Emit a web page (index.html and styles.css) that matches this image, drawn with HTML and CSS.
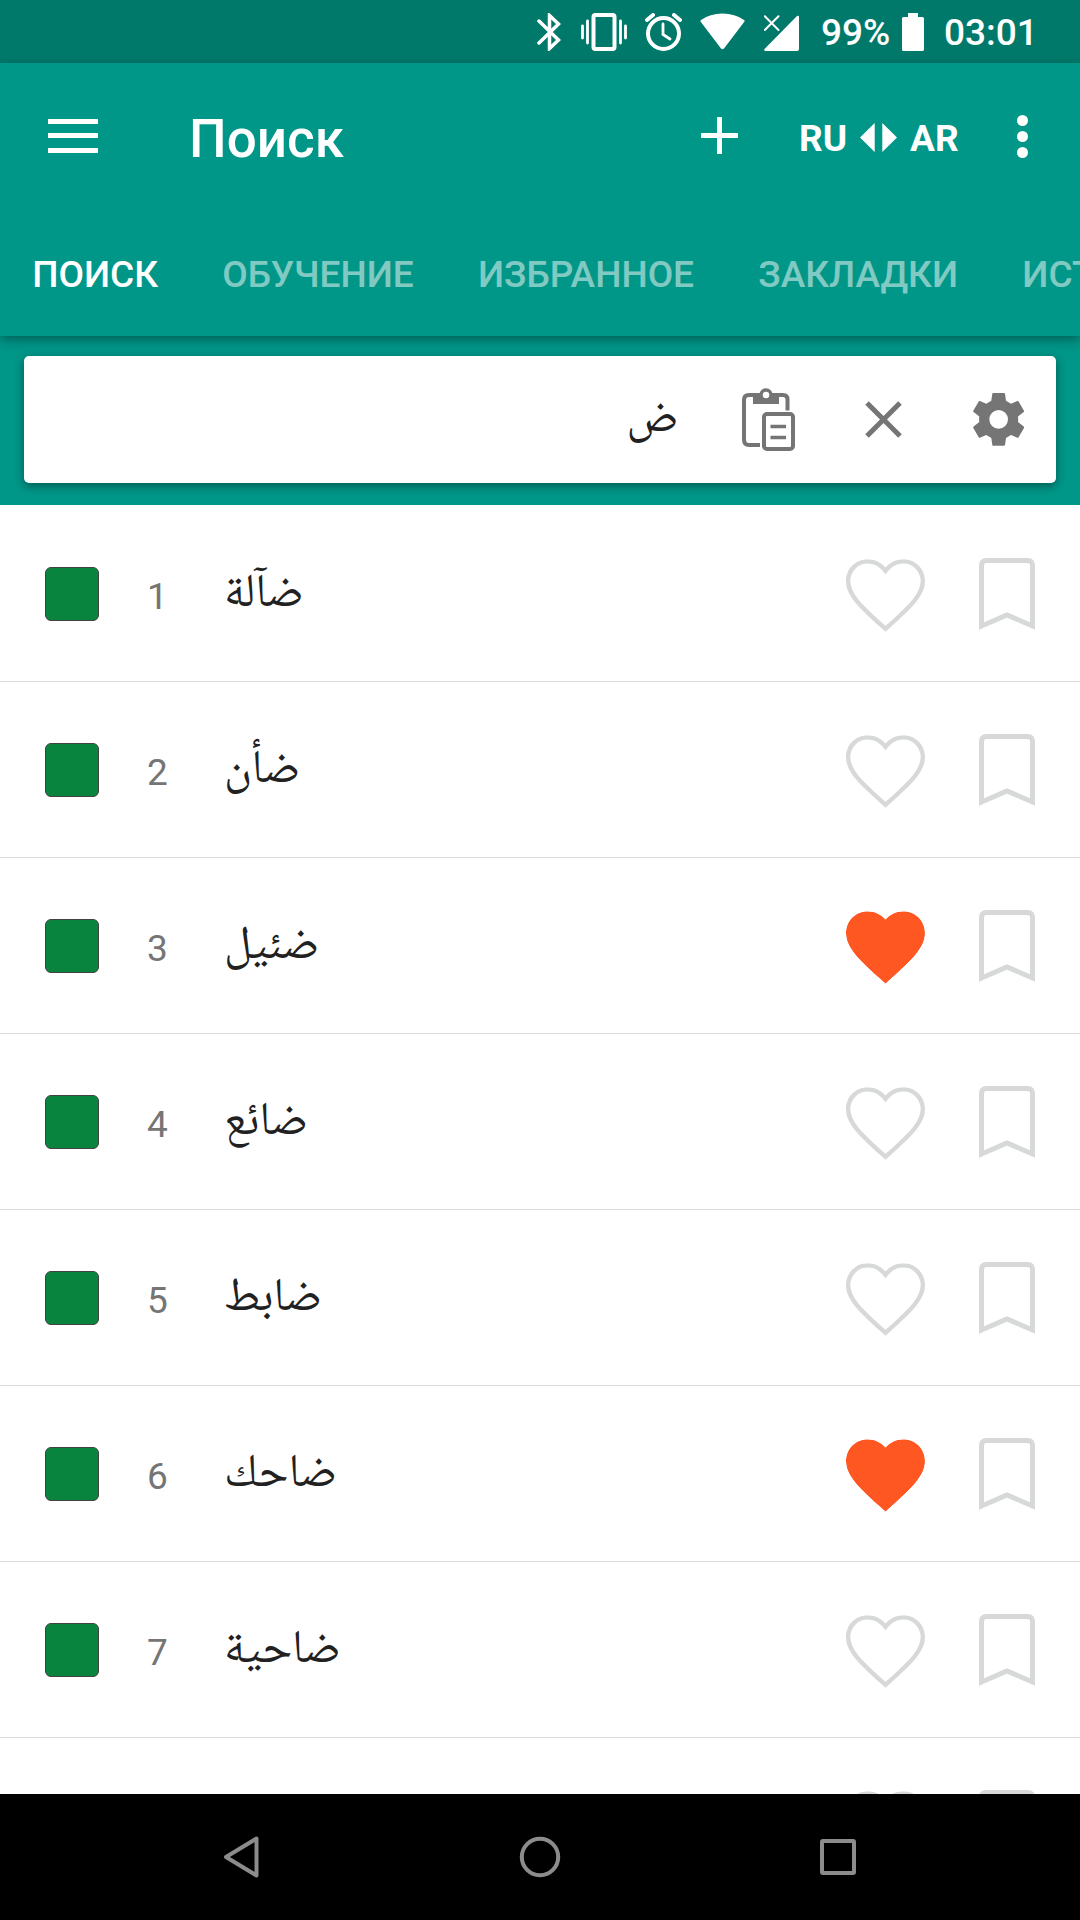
FILE: index.html
```html
<!DOCTYPE html>
<html lang="ru">

<head>
  <meta charset="utf-8">
  <meta name="viewport" content="width=device-width">
  <title>Поиск</title>
  <link rel="stylesheet" href="styles.css">
</head>

<body>
  <svg class="defs" width="0" height="0">
    <clipPath id="heart-clip">
      <path d="M12 21.350l-1.450-1.320C5.400 15.360 2 12.280 2 8.500 2 5.420 4.420 3 7.500 3c1.740 0 3.410.81 4.500 2.090C13.090 3.810 14.760 3 16.500 3 19.580 3 22 5.420 22 8.500c0 3.780-3.400 6.860-8.550 11.540z"/>
    </clipPath>
    <symbol id="heart" viewBox="2 3 20 18.350">
      <path clip-path="url(#heart-clip)" d="M12 21.350l-1.450-1.320C5.400 15.360 2 12.280 2 8.500 2 5.420 4.420 3 7.500 3c1.740 0 3.410.81 4.500 2.090C13.090 3.810 14.760 3 16.500 3 19.580 3 22 5.420 22 8.500c0 3.780-3.400 6.860-8.550 11.540z"/>
    </symbol>
    <symbol id="bookmark" viewBox="0 0 56 72">
      <path d="M2.500 68V7.500Q2.500 2.500 7.500 2.500H48.500Q53.500 2.500 53.500 7.500V68L28 57Z"/>
    </symbol>
  </svg>

  <div class="status-bar">
    <svg class="bluetooth" width="24" height="38" viewBox="0 0 24 38">
      <path d="M2 8L21.500 27L12.500 35.500V2.500L21.500 11L2 30"/>
    </svg>
    <svg class="vibrate" width="46" height="38" viewBox="0 0 46 38">
      <rect x="12.500" y="2" width="21" height="34" rx="2"/>
      <path class="thin" d="M1.500 13V25M6.500 8V30M39.500 8V30M44.500 13V25"/>
    </svg>
    <svg class="alarm" width="37" height="38" viewBox="0 0 37 38">
      <circle cx="18.500" cy="20.500" r="15.500"/>
      <path d="M2 7L8 2M35 7L29 2"/>
      <path class="thin" d="M18 11V21.500L25 26"/>
    </svg>
    <svg class="wifi" width="45" height="37" viewBox="0 0 45 37">
      <path class="fill" d="M.5 8.500Q0 7.700 1 7Q10 .5 22.500 .5T44 7Q45 7.700 44.500 8.500L24 35.500Q22.500 37 21 35.500Z"/>
    </svg>
    <svg class="signal" width="35" height="36" viewBox="0 0 35 36">
      <path class="fill" d="M33 1Q35 0 35 2V34Q35 36 33 36H1.500Q-.5 36 .5 34Z"/>
      <path class="cross" d="M.8 1.200L14.500 15M14.500 1.200L.8 15"/>
    </svg>
    <span class="percent">99%</span>
    <svg class="battery" width="22" height="38" viewBox="0 0 22 38">
      <path class="fill" d="M6 0H16V4H20.500Q22 4 22 5.500V36.500Q22 38 20.500 38H1.500Q0 38 0 36.500V5.500Q0 4 1.500 4H6Z"/>
    </svg>
    <span class="clock">03:01</span>
  </div>

  <header class="app-header">
    <div class="toolbar">
      <div class="menu"><i></i><i></i><i></i></div>
      <h1>Поиск</h1>
      <svg class="add" width="37" height="37" viewBox="0 0 37 37"><path d="M18.500 0V37M0 18.500H37"/></svg>
      <div class="langs">
        <span>RU</span>
        <svg width="37" height="29" viewBox="0 0 37 29"><path d="M14.700 0V29L0 14.500ZM22.300 0V29L37 14.500Z"/></svg>
        <span>AR</span>
      </div>
      <div class="more"><i></i><i></i><i></i></div>
    </div>
    <nav class="tabs">
      <a class="active">ПОИСК</a>
      <a>ОБУЧЕНИЕ</a>
      <a>ИЗБРАННОЕ</a>
      <a>ЗАКЛАДКИ</a>
      <a>ИСТОРИЯ</a>
    </nav>
  </header>

  <div class="search">
    <div class="search-card">
      <span class="query" lang="ar" dir="rtl">ض</span>
      <svg class="paste" width="53" height="63" viewBox="0 0 53 63">
        <path d="M18 57H7Q2 57 2 51.500V12Q2 7 7 7H41Q45.500 7 45.500 11.500V22.500"/>
        <path class="fill" d="M11 6H37V16H11Z"/>
        <circle class="ring" cx="24" cy="7" r="5"/>
        <rect x="22" y="26" width="29" height="35" rx="3"/>
        <path class="thin" d="M28.500 38.500H44M28.500 49.500H44"/>
      </svg>
      <svg class="clear" width="37" height="37" viewBox="0 0 37 37"><path d="M2 2L35 35M35 2L2 35"/></svg>
      <svg class="settings" width="52" height="53" viewBox="0 0 52 53">
        <path fill-rule="evenodd" d="M20.200 0H31Q31.800 0 32 .8L33 7.800L38 10.700L44.400 8Q45.200 7.800 45.600 8.500L51 17.800Q51.400 18.500 50.700 19.100L45 23.600Q45.400 26.400 45 29.100L50.700 33.600Q51.400 34.200 51 34.900L45.600 44.200Q45.200 44.900 44.400 44.700L38 42L33 44.900L32 51.900Q31.800 52.700 31 52.700H20.200Q19.400 52.700 19.300 51.900L18.300 44.900L13.300 42L6.900 44.700Q6.100 44.900 5.700 44.200L.3 34.900Q-.1 34.200 .6 33.600L6.300 29.100Q5.900 26.400 6.300 23.600L.6 19.100Q-.1 18.500 .3 17.800L5.700 8.500Q6.100 7.800 6.900 8L13.300 10.700L18.300 7.800L19.300 .8Q19.400 0 20.200 0ZM25.650 17A9.350 9.350 0 1 0 25.650 35.700A9.350 9.350 0 1 0 25.650 17Z"/>
      </svg>
    </div>
  </div>

  <ul class="words">
    <li><i class="level"></i><span class="num">1</span><span class="word" lang="ar" dir="rtl">ضآلة</span>
      <svg class="heart"><use href="#heart"/></svg><svg class="bookmark"><use href="#bookmark"/></svg></li>
    <li><i class="level"></i><span class="num">2</span><span class="word" lang="ar" dir="rtl">ضأن</span>
      <svg class="heart"><use href="#heart"/></svg><svg class="bookmark"><use href="#bookmark"/></svg></li>
    <li><i class="level"></i><span class="num">3</span><span class="word" lang="ar" dir="rtl">ضئيل</span>
      <svg class="heart on"><use href="#heart"/></svg><svg class="bookmark"><use href="#bookmark"/></svg></li>
    <li><i class="level"></i><span class="num">4</span><span class="word" lang="ar" dir="rtl">ضائع</span>
      <svg class="heart"><use href="#heart"/></svg><svg class="bookmark"><use href="#bookmark"/></svg></li>
    <li><i class="level"></i><span class="num">5</span><span class="word" lang="ar" dir="rtl">ضابط</span>
      <svg class="heart"><use href="#heart"/></svg><svg class="bookmark"><use href="#bookmark"/></svg></li>
    <li><i class="level"></i><span class="num">6</span><span class="word" lang="ar" dir="rtl">ضاحك</span>
      <svg class="heart on"><use href="#heart"/></svg><svg class="bookmark"><use href="#bookmark"/></svg></li>
    <li><i class="level"></i><span class="num">7</span><span class="word" lang="ar" dir="rtl">ضاحية</span>
      <svg class="heart"><use href="#heart"/></svg><svg class="bookmark"><use href="#bookmark"/></svg></li>
    <li>
      <svg class="heart"><use href="#heart"/></svg><svg class="bookmark"><use href="#bookmark"/></svg></li>
  </ul>

  <div class="nav-bar">
    <svg width="42" height="42" viewBox="0 0 42 42"><path d="M35.500 2.500V39.500L5 21Z"/></svg>
    <svg width="42" height="42" viewBox="0 0 42 42"><circle cx="21" cy="21" r="18.200"/></svg>
    <svg width="42" height="42" viewBox="0 0 42 42"><rect x="5" y="5" width="32" height="32" rx="1"/></svg>
  </div>
</body>

</html>
```
FILE: styles.css
```css
* {
  box-sizing: border-box;
}

body {
  margin: 0;
  width: 1080px;
  height: 1920px;
  display: flex;
  flex-direction: column;
  overflow: hidden;
  background: #fff;
  font-family: Roboto, sans-serif;
}

svg {
  display: block;
  flex: none;
  fill: none;
}

/* status bar */
.status-bar {
  flex: none;
  height: 63px;
  display: flex;
  align-items: center;
  padding-left: 537px;
  background: #00796b;
  color: #fff;
  font-size: 37px;
  font-weight: 500;
  line-height: 68px;
}

.status-bar span {
  margin-top: 2px;
}

.status-bar svg {
  stroke: #fff;
  stroke-width: 4;
  stroke-linecap: round;
}

.status-bar .thin {
  stroke-width: 2.8;
}

.status-bar .fill {
  fill: #fff;
  stroke: none;
}

.status-bar .cross {
  stroke-width: 2;
}

.status-bar .bluetooth {
  stroke-width: 3.5;
}

.vibrate {
  margin-left: 20px;
}

.alarm {
  margin-left: 18px;
}

.wifi {
  margin-left: 18px;
}

.signal {
  margin: 2px 0 0 19px;
}

.percent {
  width: 70px;
  margin-left: 22px;
}

.battery {
  margin-left: 11px;
}

.clock {
  margin-left: 20px;
}

/* header */
.app-header {
  flex: none;
  position: relative;
  z-index: 1;
  height: 273px;
  background: #009688;
  color: #fff;
  box-shadow: 0 4px 10px rgba(0, 0, 0, .35);
}

.toolbar {
  height: 147px;
  display: flex;
  align-items: center;
  padding-left: 48px;
}

.menu {
  width: 50px;
  height: 34px;
  margin-bottom: 2px;
  display: flex;
  flex-direction: column;
  justify-content: space-between;
}

.menu i {
  height: 5px;
  background: #fff;
}

h1 {
  width: 512px;
  margin: 5px 0 0 91px;
  font-size: 53px;
  font-weight: 500;
  line-height: 60px;
}

.toolbar .add {
  margin-bottom: 2px;
  stroke: #fff;
  stroke-width: 5;
}

.langs {
  width: 160px;
  margin: 3px 0 0 61px;
  display: flex;
  align-items: center;
  font-size: 37px;
  font-weight: 700;
}

.langs svg {
  margin: 0 13px 2px;
  fill: #fff;
}

.more {
  width: 11px;
  height: 43px;
  margin-left: 58px;
  display: flex;
  flex-direction: column;
  justify-content: space-between;
}

.more i {
  height: 11px;
  border-radius: 50%;
  background: #fff;
}

.tabs {
  height: 126px;
  display: flex;
  align-items: center;
  overflow: hidden;
  font-size: 37px;
  font-weight: 500;
}

.tabs a {
  flex: none;
  padding: 2px 32px 0 32.2px;
  opacity: .5;
}

.tabs .active {
  opacity: 1;
}

/* search field */
.search {
  flex: none;
  height: 169px;
  padding: 20px 24px 22px;
  background: #009688;
}

.search-card {
  height: 127px;
  display: flex;
  align-items: center;
  justify-content: flex-end;
  padding-right: 31px;
  border-radius: 5px;
  background: #fff;
  box-shadow: 0 3px 10px rgba(0, 0, 0, .4);
}

.query,
.word {
  margin-top: 3px;
  font-family: "Noto Naskh Arabic", "DejaVu Sans", sans-serif;
  font-size: 47px;
  line-height: 60px;
  color: #212121;
}

.query {
  margin-right: 64px;
}

.search-card svg {
  overflow: visible;
  stroke: #757575;
  stroke-width: 4;
}

.search-card .fill {
  fill: #757575;
  stroke: none;
}

.search-card .ring {
  fill: #fff;
  stroke-width: 3.5;
}

.search-card .thin {
  stroke-width: 3.5;
}

.search-card .clear {
  margin: 0 71px 0 70px;
  stroke-width: 5;
}

.search-card .settings {
  fill: #757575;
  stroke: none;
}

/* word list */
.words {
  flex: 1;
  min-height: 0;
  margin: 0;
  padding: 0;
  overflow: hidden;
  list-style: none;
}

.words li {
  height: 176px;
  display: flex;
  align-items: center;
  padding: 3px 45.5px 0 45px;
}

.words li + li {
  padding-top: 2px;
  border-top: 1px solid #d9d9d9;
}

.level {
  width: 54px;
  height: 54px;
  margin-bottom: 2px;
  border: 1px solid #424242;
  border-radius: 6px;
  background: #08843f;
}

.num {
  width: 41px;
  margin: 4px 0 0 38px;
  text-align: center;
  color: #757575;
  font-size: 37px;
}

.word {
  margin-left: 46px;
}

.heart {
  width: 79px;
  height: 73px;
  margin: 1px 0 0 auto;
  stroke: #d7d9d8;
  stroke-width: 2.2;
}

.heart.on {
  fill: #ff5722;
  stroke: none;
}

.bookmark {
  width: 56px;
  height: 72px;
  margin: 0 0 1px 53.5px;
  stroke: #d7d9d8;
  stroke-width: 5;
}

/* system navigation */
.nav-bar {
  flex: none;
  height: 126px;
  display: flex;
  align-items: center;
  justify-content: space-between;
  padding: 0 221px;
  background: #000;
}

.nav-bar svg {
  stroke: #8c8c8c;
  stroke-width: 4;
  stroke-linejoin: round;
}
```
